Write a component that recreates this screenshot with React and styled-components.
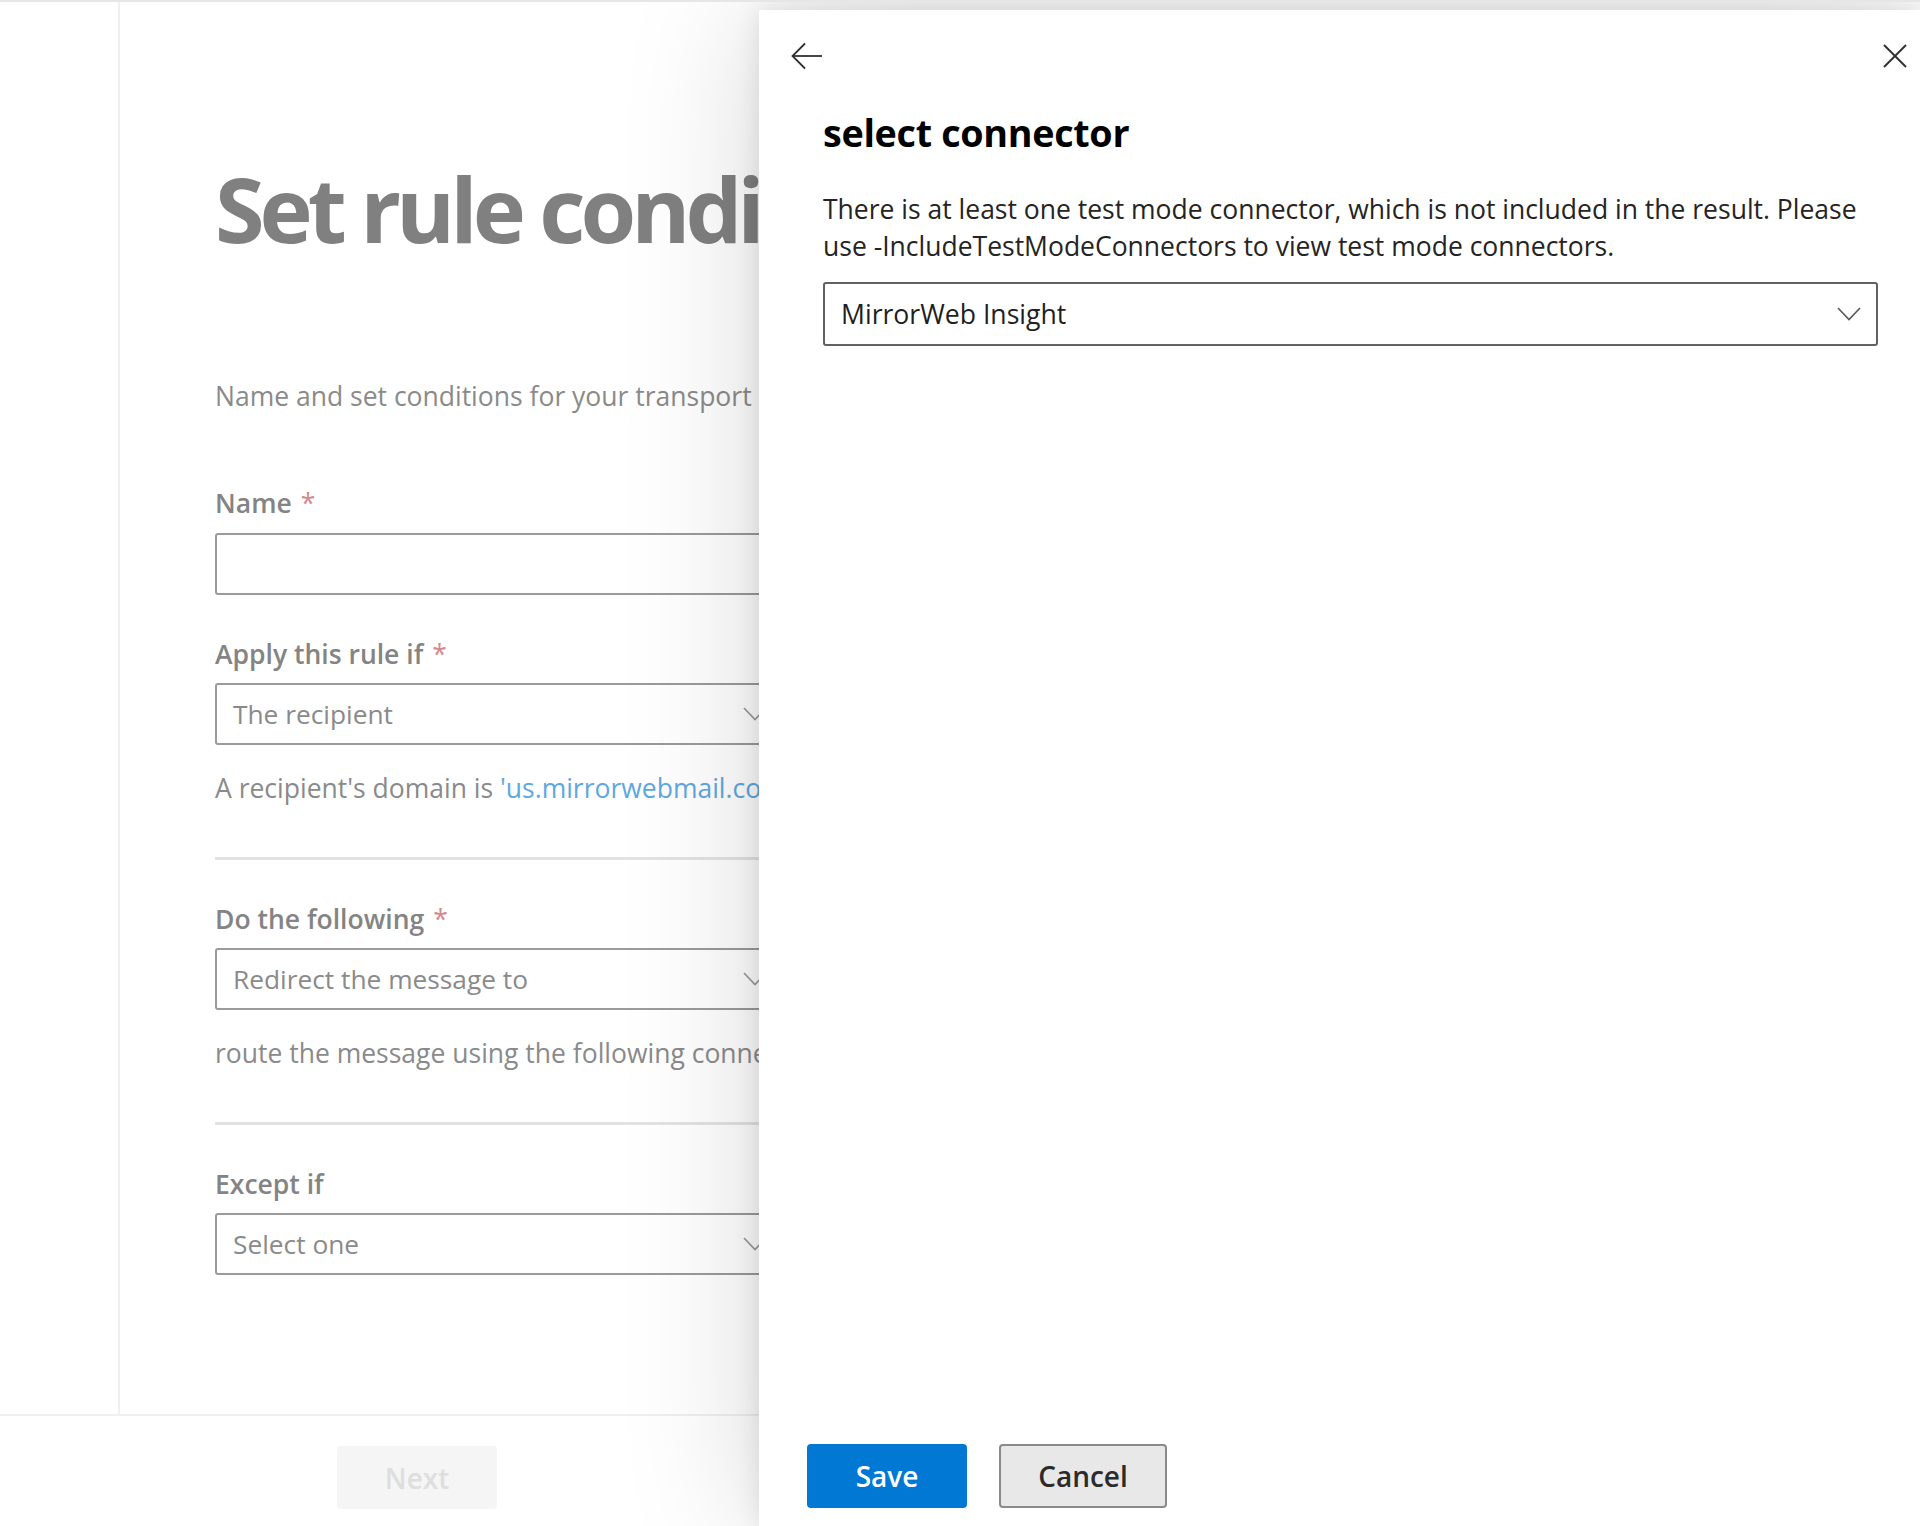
import React from "react";
import styled, { createGlobalStyle } from "styled-components";

const GlobalStyle = createGlobalStyle`
  html, body { margin: 0; padding: 0; background: #ffffff; }
  body { font-family: "Open Sans", "Noto Sans", "Liberation Sans", sans-serif; }
  * { box-sizing: border-box; }
`;

const Page = styled.div`
  position: relative;
  width: 1920px;
  height: 1526px;
  overflow: hidden;
  border-top: 2px solid #e6e6e6;
  display: flex;
  flex-direction: column;
`;

const Body = styled.div`
  display: flex;
  height: 1412px;
`;

const Sidebar = styled.aside`
  width: 120px;
  flex: none;
  border-right: 2px solid #f0f0f0;
`;

const Main = styled.main`
  width: 640px;
  flex: none;
  overflow: hidden;
  padding: 152px 0 0 95px;
  display: flex;
  flex-direction: column;
`;

const Title = styled.h1`
  margin: 0;
  font-size: 90px;
  line-height: 108px;
  font-weight: 700;
  color: #808080;
  white-space: nowrap;
  letter-spacing: -5px;
`;

const Description = styled.p`
  margin: 116px 0 0;
  font-size: 26.5px;
  line-height: 36px;
  color: #8a8a8a;
  white-space: nowrap;
`;

const Form = styled.div`
  width: 570px;
  flex: none;
  display: flex;
  flex-direction: column;
  margin-top: 71px;
`;

const Label = styled.label`
  display: block;
  margin-top: ${(p) => (p.$first ? "0" : "41px")};
  font-size: 26.5px;
  line-height: 36px;
  font-weight: 600;
  color: #848484;
  white-space: nowrap;
`;

const Required = styled.span`
  color: #d4888c;
  margin-left: 9px;
  font-weight: 400;
`;

const InputBox = styled.div`
  margin-top: 12px;
  height: 62px;
  border: 2px solid #9b9b9b;
  border-radius: 3px;
  background: #ffffff;
`;

const SelectBox = styled.div`
  margin-top: 11px;
  height: 62px;
  border: 2px solid #9b9b9b;
  border-radius: 3px;
  display: flex;
  align-items: center;
  justify-content: space-between;
  padding: 0 16px 0 16px;
  font-size: 26.3px;
  color: #8a8a8a;
  white-space: nowrap;
`;

const Note = styled.div`
  margin-top: 25px;
  font-size: 26.5px;
  line-height: 36px;
  color: #8a8a8a;
  white-space: nowrap;
`;

const Link = styled.span`
  color: #5ea8e2;
`;

const Divider = styled.hr`
  margin: 51px 0 0;
  border: none;
  height: 3px;
  width: 700px;
  background: #e3e3e3;
`;

const Footer = styled.footer`
  flex: 1;
  border-top: 2px solid #f0f0f0;
  padding: 30px 0 0 337px;
`;

const NextButton = styled.button`
  width: 160px;
  height: 63px;
  border: none;
  border-radius: 4px;
  background: #f5f5f5;
  color: #dedede;
  font-family: inherit;
  font-size: 28px;
  font-weight: 600;
`;

const Panel = styled.section`
  position: absolute;
  top: 8px;
  right: 0;
  bottom: 0;
  width: 1161px;
  background: #ffffff;
  box-shadow: 0 0 130px rgba(0, 0, 0, 0.16), 0 0 24px rgba(0, 0, 0, 0.1);
  display: flex;
  flex-direction: column;
`;

const PanelHeader = styled.div`
  height: 40px;
  margin-top: 26px;
  padding: 0 13px 0 32px;
  display: flex;
  align-items: center;
  justify-content: space-between;
`;

const IconButton = styled.button`
  border: none;
  background: none;
  padding: 0;
  display: flex;
  align-items: center;
  justify-content: center;
  color: #323130;
`;

const PanelContent = styled.div`
  flex: 1;
  padding: 0 42px 0 64px;
`;

const PanelTitle = styled.h2`
  margin: 33px 0 0;
  font-size: 37.7px;
  line-height: 48px;
  font-weight: 700;
  color: #000000;
  letter-spacing: -0.3px;
`;

const PanelText = styled.p`
  margin: 34px 0 0;
  max-width: 1045px;
  font-size: 26.5px;
  line-height: 37px;
  color: #252423;
`;

const Dropdown = styled.div`
  margin-top: 17px;
  height: 64px;
  border: 2px solid #616161;
  border-radius: 3px;
  display: flex;
  align-items: center;
  justify-content: space-between;
  padding: 0 15px 0 16px;
  font-size: 26.6px;
  color: #1f1f1f;
`;

const PanelFooter = styled.div`
  display: flex;
  gap: 32px;
  padding: 0 0 18px 48px;
`;

const PrimaryButton = styled.button`
  width: 160px;
  height: 64px;
  border: none;
  border-radius: 4px;
  background: #0078d4;
  color: #ffffff;
  font-family: inherit;
  font-size: 28px;
  font-weight: 600;
`;

const DefaultButton = styled.button`
  width: 168px;
  height: 64px;
  border: 2px solid #8a8a8a;
  border-radius: 4px;
  background: #e8e8e8;
  color: #2b2b2b;
  font-family: inherit;
  font-size: 28px;
  font-weight: 600;
`;

const Chevron = ({ color = "#555" }) => (
  <svg width="24" height="14" viewBox="0 0 24 14" fill="none">
    <polyline points="1,1 12,12.5 23,1" stroke={color} strokeWidth="1.7" />
  </svg>
);

const BackIcon = () => (
  <svg width="32" height="28" viewBox="0 0 32 28" fill="none">
    <line x1="1.5" y1="14" x2="31" y2="14" stroke="currentColor" strokeWidth="1.8" />
    <polyline points="14,1.5 1.5,14 14,26.5" stroke="currentColor" strokeWidth="1.8" />
  </svg>
);

const CloseIcon = () => (
  <svg width="24" height="24" viewBox="0 0 24 24" fill="none">
    <line x1="1" y1="1" x2="23" y2="23" stroke="currentColor" strokeWidth="2" />
    <line x1="23" y1="1" x2="1" y2="23" stroke="currentColor" strokeWidth="2" />
  </svg>
);

export default function App() {
  return (
    <>
      <GlobalStyle />
      <Page>
        <Body>
          <Sidebar />
          <Main>
            <Title>Set rule conditions</Title>
            <Description>
              Name and set conditions for your transport rule
            </Description>
            <Form>
              <Label $first>
                Name<Required>*</Required>
              </Label>
              <InputBox />
              <Label>
                Apply this rule if<Required>*</Required>
              </Label>
              <SelectBox>
                The recipient
                <Chevron color="#9b9b9b" />
              </SelectBox>
              <Note>
                A recipient's domain is <Link>'us.mirrorwebmail.com'</Link>
              </Note>
              <Divider />
              <Label>
                Do the following<Required>*</Required>
              </Label>
              <SelectBox>
                Redirect the message to
                <Chevron color="#9b9b9b" />
              </SelectBox>
              <Note>route the message using the following connector</Note>
              <Divider />
              <Label>Except if</Label>
              <SelectBox>
                Select one
                <Chevron color="#9b9b9b" />
              </SelectBox>
            </Form>
          </Main>
        </Body>
        <Footer>
          <NextButton>Next</NextButton>
        </Footer>
        <Panel>
          <PanelHeader>
            <IconButton aria-label="Back">
              <BackIcon />
            </IconButton>
            <IconButton aria-label="Close">
              <CloseIcon />
            </IconButton>
          </PanelHeader>
          <PanelContent>
            <PanelTitle>select connector</PanelTitle>
            <PanelText>
              There is at least one test mode connector, which is not included
              in the result. Please use -IncludeTestModeConnectors to view test
              mode connectors.
            </PanelText>
            <Dropdown>
              MirrorWeb Insight
              <Chevron color="#5a5a5a" />
            </Dropdown>
          </PanelContent>
          <PanelFooter>
            <PrimaryButton>Save</PrimaryButton>
            <DefaultButton>Cancel</DefaultButton>
          </PanelFooter>
        </Panel>
      </Page>
    </>
  );
}
